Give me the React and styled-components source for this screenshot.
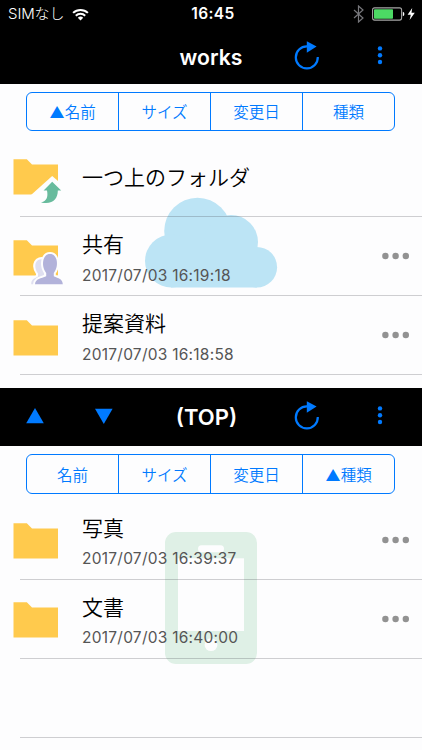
import React from 'react';
import styled, { createGlobalStyle } from 'styled-components';

const BLUE = '#007aff';

const GlobalStyle = createGlobalStyle`
    * {
        box-sizing: border-box;
    }
    body {
        margin: 0;
        background: #fdfdfe;
        font-family: Inter, "Noto Sans CJK JP", sans-serif;
    }
`;

const Screen = styled.div`
    width: 422px;
    height: 750px;
    overflow: hidden;
    background: #fdfdfe;
    display: flex;
    flex-direction: column;
`;

const StatusBar = styled.div`
    height: 28px;
    padding: 0 6px 0 8px;
    background: #000000;
    color: #ffffff;
    display: grid;
    grid-template-columns: 1fr auto 1fr;
    align-items: center;
`;

const StatusGroup = styled.div`
    display: flex;
    align-items: center;
    justify-content: ${props => props.$end ? 'flex-end' : 'flex-start'};
    gap: 8px;
`;

const Carrier = styled.span`
    font-size: 15px;
    line-height: 28px;
    font-weight: 300;
    letter-spacing: -0.1px;
`;

const Clock = styled.span`
    padding-left: 2px;
    font-size: 15.5px;
    line-height: 28px;
    font-weight: 600;
    letter-spacing: 0.4px;
`;

const NavBar = styled.div`
    height: ${props => props.$height}px;
    padding-bottom: 2px;
    flex: none;
    background: #000000;
    display: grid;
    grid-template-columns: 70px ${props => 206 - props.$titleWidth}px ${props => props.$titleWidth}px 1fr 85px;
    align-items: center;
    justify-items: center;
`;

const NavTitle = styled.h1`
    grid-column: 3;
    margin: 0;
    padding-top: 2px;
    color: #ffffff;
    font-size: ${props => props.$size}px;
    line-height: 54px;
    font-weight: 600;
    white-space: nowrap;
`;

const NavButton = styled.button`
    grid-column: ${props => props.$column};
    padding: 0;
    border: none;
    background: none;
    display: flex;
    cursor: pointer;
`;

const Pane = styled.div`
    position: relative;
    flex: none;
    height: ${props => props.$height}px;
    overflow: hidden;
`;

const Watermark = styled.svg`
    position: absolute;
    top: ${props => props.$top}px;
    left: ${props => props.$left}px;
`;

const Tabs = styled.div`
    position: relative;
    margin: 8px 27px 0 26px;
    height: ${props => props.$height}px;
    border: 1.4px solid ${BLUE};
    border-radius: 6px;
    display: grid;
    grid-template-columns: 91px 92px 92px 1fr;
`;

const Tab = styled.button`
    padding: 0 0 1px;
    border: none;
    border-left: ${props => props.$first ? 'none' : `1px solid ${BLUE}`};
    background: none;
    color: ${BLUE};
    font-family: inherit;
    font-size: 15.5px;
    font-weight: 350;
    display: flex;
    align-items: center;
    justify-content: center;
    cursor: pointer;
`;

const List = styled.div`
    position: relative;
    padding-top: ${props => props.$top}px;
`;

const Row = styled.div`
    position: relative;
    height: 79px;
    padding: 0 12px 0 13px;
    display: flex;
    align-items: flex-start;
    &::after {
        content: '';
        position: absolute;
        left: 20px;
        right: 0;
        bottom: 0;
        height: 1px;
        background: rgba(60, 60, 67, 0.24);
    }
`;

const IconBox = styled.div`
    width: 69px;
    flex: none;
    padding-top: ${props => props.$top}px;
    display: flex;
`;

const Texts = styled.div`
    flex: 1;
    padding-top: 12px;
`;

const Name = styled.div`
    height: 32px;
    color: #000000;
    font-size: 21px;
    line-height: 32px;
    font-weight: 350;
    white-space: nowrap;
`;

const SingleName = styled(Name)`
    padding-top: 12px;
`;

const Stamp = styled.div`
    margin-top: ${props => props.$gap}px;
    height: 24px;
    color: #555555;
    font-size: 15.5px;
    line-height: 24px;
    letter-spacing: 0.25px;
    white-space: nowrap;
`;

const More = styled.button`
    margin-top: 35px;
    padding: 0;
    border: none;
    background: none;
    display: flex;
    cursor: pointer;
`;

const WifiIcon = () => (
    <svg width="17" height="13" viewBox="0 0 17 13">
        <g fill="none" stroke="#ffffff" strokeWidth="2">
            <path d="M1.1 4.9a10.6 10.6 0 0 1 14.8 0" />
            <path d="M3.8 7.7a6.8 6.8 0 0 1 9.4 0" />
        </g>
        <path d="M5.8 9.7a4 4 0 0 1 5.4 0L8.5 12.5z" fill="#ffffff" />
    </svg>
);

const BluetoothIcon = () => (
    <svg width="11" height="18" viewBox="0 0 11 18">
        <path d="M1 5l9 8-4.5 4V1L10 5l-9 8" fill="none" stroke="#77777b" strokeWidth="1.2" />
    </svg>
);

const BatteryIcon = () => (
    <svg width="44" height="14" viewBox="0 0 44 14">
        <rect x="0.6" y="0.9" width="29" height="12.2" rx="2" fill="none" stroke="#a5a5a5" strokeWidth="1.1" />
        <rect x="2" y="2.2" width="19" height="9.6" rx="0.8" fill="#4cd964" />
        <path d="M30.8 4.8q1.6.5 1.6 2.2t-1.6 2.2z" fill="#ffffff" />
        <path d="M40.2 1L35.6 7.8h3.2L37.6 13l5.2-7.2h-3.3z" fill="#ffffff" />
    </svg>
);

const ReloadIcon = () => (
    <svg width="26" height="30" viewBox="0 0 26 30">
        <path d="M23.8 16A11 11 0 1 1 13 5.4" fill="none" stroke={BLUE} strokeWidth="2.2" />
        <path d="M12.8 0.2v11.6l9.8-6.3z" fill={BLUE} />
    </svg>
);

const KebabIcon = () => (
    <svg width="6" height="20" viewBox="0 0 6 20">
        {[2.4, 9.2, 16].map(y => <circle key={y} cx="3" cy={y} r="2.2" fill={BLUE} />)}
    </svg>
);

const ArrowIcon = ({ down }) => (
    <svg width="18" height="16" viewBox="0 0 18 16">
        <path d={down ? 'M0 0.8h17.6L8.8 16z' : 'M0.2 15.3h17.6L9 0z'} fill={BLUE} />
    </svg>
);

const MoreIcon = () => (
    <svg width="28" height="8" viewBox="0 0 28 8">
        {[3.4, 13.6, 23.8].map(x => <circle key={x} cx={x} cy="4" r="3.2" fill="#929292" />)}
    </svg>
);

const FolderIcon = ({ kind }) => (
    <svg width="52" height="46" viewBox="0 0 52 46">
        <path d="M0.5 0.3H13.8L19 5.6H45V35.5H0.5z" fill="#ffca4d" />
        {kind === 'up' && (
            <g>
                <path d="M18 36L39.2 17L52 28V46H18z" fill="#fdfdfe" />
                <path d="M39.2 22.7L48.2 31.6H44.8C45 39.5 39.5 46.3 28 43.4C33 42.4 35.4 38.5 34 31.6H30.6z" fill="#68bb9d" />
            </g>
        )}
        {kind === 'shared' && (
            <g stroke="#fdfdfe" strokeWidth="4" paintOrder="stroke" strokeLinejoin="round">
                <path d="M18.2 44.3C18.2 39.5 21 38.7 25 36.6V33.5C22 29.5 21.8 25 23 22.4C24.5 19.3 28 18.5 31 19.6V44.3z" fill="#dfdff0" />
                <path d="M22 44.3C22.4 38.6 28 38.5 33.2 36.3V32.9C29.8 28.5 29.5 23.5 30.6 19.3C31.8 15.6 34 14 37 14C40 14 42.2 15.6 43.4 19.3C44.5 23.5 44.2 28.5 40.8 32.9V36.3C45.5 38.5 49.4 38.6 49.8 44.3z" fill="#b2b2da" />
            </g>
        )}
    </svg>
);

const Cloud = () => (
    <Watermark $top={113} $left={145} width="133" height="91" viewBox="145 197 133 91">
        <g fill="#bce4f5">
            <circle cx="197.5" cy="231" r="33.3" />
            <circle cx="171.5" cy="261" r="26.5" />
            <circle cx="231" cy="242" r="27" />
            <circle cx="256.8" cy="267.2" r="20.3" />
            <rect x="171" y="240" width="86" height="47.5" />
        </g>
    </Watermark>
);

const Phone = () => (
    <Watermark $top={86} $left={165} width="92" height="132" viewBox="0 0 92 132">
        <rect width="92" height="132" rx="11" fill="#dff0e6" />
        <rect x="13" y="26.3" width="66" height="72.7" fill="#fdfdfe" />
        <rect x="33" y="13.2" width="26" height="7" rx="3.5" fill="#fdfdfe" />
        <circle cx="46" cy="112.7" r="6.4" fill="#fdfdfe" />
    </Watermark>
);

const SortTabs = ({ labels, height }) => (
    <Tabs $height={height}>
        {labels.map((label, i) => <Tab key={label} $first={i === 0}>{label}</Tab>)}
    </Tabs>
);

const FileRow = ({ name, date, kind, iconTop, dateGap }) => (
    <Row>
        <IconBox $top={iconTop}><FolderIcon kind={kind} /></IconBox>
        <Texts>
            <Name>{name}</Name>
            <Stamp $gap={dateGap}>{date}</Stamp>
        </Texts>
        <More><MoreIcon /></More>
    </Row>
);

const App = () => (
    <Screen>
        <GlobalStyle />
        <StatusBar>
            <StatusGroup><Carrier>SIMなし</Carrier><WifiIcon /></StatusGroup>
            <Clock>16:45</Clock>
            <StatusGroup $end><BluetoothIcon /><BatteryIcon /></StatusGroup>
        </StatusBar>
        <NavBar $height={56} $titleWidth={130}>
            <NavTitle $size={21.2}>works</NavTitle>
            <NavButton $column={4}><ReloadIcon /></NavButton>
            <NavButton $column={5}><KebabIcon /></NavButton>
        </NavBar>
        <Pane $height={304}>
            <Cloud />
            <SortTabs height={39} labels={['▲名前', 'サイズ', '変更日', '種類']} />
            <List $top={7}>
                <Row>
                    <IconBox $top={21}><FolderIcon kind="up" /></IconBox>
                    <Texts><SingleName>一つ上のフォルダ</SingleName></Texts>
                </Row>
                <FileRow name="共有" date="2017/07/03 16:19:18" kind="shared" iconTop={23} dateGap={3} />
                <FileRow name="提案資料" date="2017/07/03 16:18:58" iconTop={24} dateGap={3} />
            </List>
        </Pane>
        <NavBar $height={58} $titleWidth={139}>
            <NavButton $column={1}><ArrowIcon /></NavButton>
            <NavButton $column={2}><ArrowIcon down /></NavButton>
            <NavTitle $size={22}>(TOP)</NavTitle>
            <NavButton $column={4}><ReloadIcon /></NavButton>
            <NavButton $column={5}><KebabIcon /></NavButton>
        </NavBar>
        <Pane $height={304}>
            <Phone />
            <SortTabs height={40} labels={['名前', 'サイズ', '変更日', '▲種類']} />
            <List $top={7}>
                <FileRow name="写真" date="2017/07/03 16:39:37" iconTop={22} dateGap={2} />
                <FileRow name="文書" date="2017/07/03 16:40:00" iconTop={22} dateGap={2} />
                <Row />
            </List>
        </Pane>
    </Screen>
);

export default App;
